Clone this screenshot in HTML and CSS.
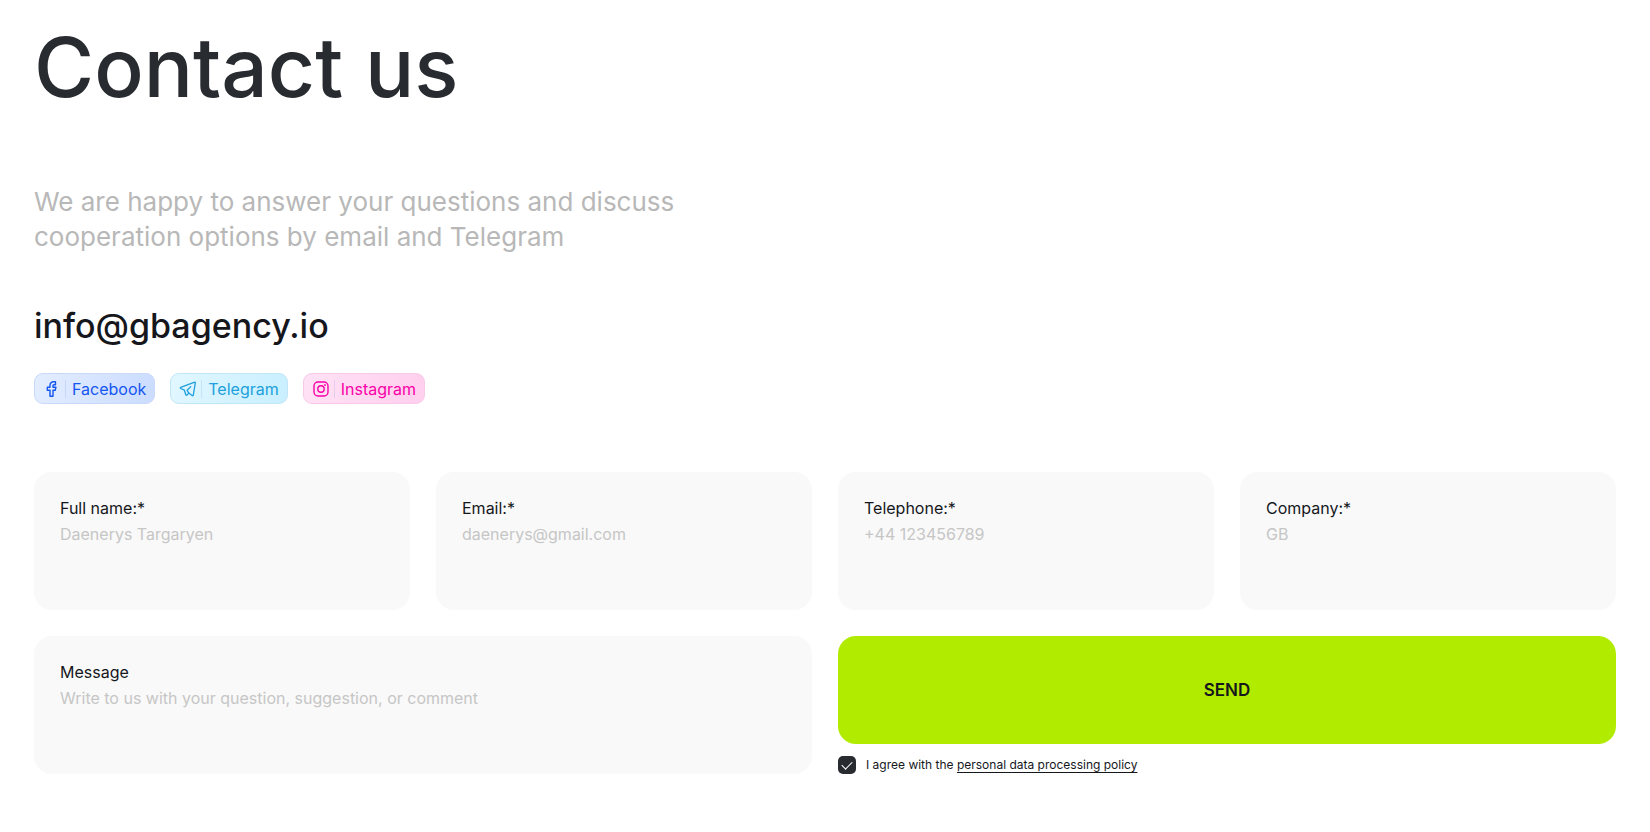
FILE: index.html
```html
<!DOCTYPE html>
<html lang="en">
<head>
  <meta charset="UTF-8">
  <meta name="viewport" content="width=device-width, initial-scale=1.0">
  <title>Contact us</title>
  <link rel="stylesheet" href="styles.css">
</head>
<body>
  <main class="contact">
    <h1 class="title">Contact us</h1>
    <p class="intro">We are happy to answer your questions and discuss cooperation options by email and Telegram</p>
    <a class="email" href="mailto:info@gbagency.io">info@gbagency.io</a>

    <nav class="socials">
      <a class="social facebook" href="#">
        <svg class="icon" viewBox="0 0 18 18" fill="none" stroke="currentColor" stroke-width="1.4" stroke-linejoin="round">
          <path d="M12 1.700h-1.500a3.500 3.500 0 0 0-3.500 3.500v2.100H4.300v3H7v6h3v-6h2.200l.7-3H10V5.600c0-.6.300-.9.900-.9H12.500v-3z"/>
        </svg>
        <span class="social-name">Facebook</span>
      </a>
      <a class="social telegram" href="#">
        <svg class="icon" viewBox="0 0 18 18" fill="none" stroke="currentColor" stroke-width="1.300" stroke-linejoin="round" stroke-linecap="round">
          <path d="M15.700 2.200 1.700 7.300c-.6.200-.6.900 0 1.200l3.700 1.700 1.400 4.500c.2.600.8.700 1.200.3l1.800-1.900 3.300 2.500c.5.400 1.100.1 1.200-.5L16.300 2.800c.1-.5-.2-.8-.6-.6z"/>
          <path d="M11.800 6.600 8.100 10.300l1.700 2.800"/>
        </svg>
        <span class="social-name">Telegram</span>
      </a>
      <a class="social instagram" href="#">
        <svg class="icon" viewBox="0 0 18 18" fill="none" stroke="currentColor" stroke-width="1.400">
          <rect x="2" y="2" width="14" height="14" rx="4"/>
          <circle cx="9" cy="9" r="3.200"/>
          <circle cx="13" cy="5" r=".9" fill="currentColor" stroke="none"/>
        </svg>
        <span class="social-name">Instagram</span>
      </a>
    </nav>

    <form class="form">
      <div class="field">
        <label for="name">Full name:*</label>
        <input type="text" id="name" placeholder="Daenerys Targaryen">
      </div>
      <div class="field">
        <label for="email">Email:*</label>
        <input type="email" id="email" placeholder="daenerys@gmail.com">
      </div>
      <div class="field">
        <label for="phone">Telephone:*</label>
        <input type="tel" id="phone" placeholder="+44 123456789">
      </div>
      <div class="field">
        <label for="company">Company:*</label>
        <input type="text" id="company" placeholder="GB">
      </div>
      <div class="field wide">
        <label for="message">Message</label>
        <textarea id="message" rows="2" placeholder="Write to us with your question, suggestion, or comment"></textarea>
      </div>
      <div class="submit wide">
        <button type="submit" class="send">SEND</button>
        <div class="agree">
          <input type="checkbox" id="agree" checked>
          <label for="agree">I agree with the <a href="#">personal data processing policy</a></label>
        </div>
      </div>
    </form>
  </main>
</body>
</html>
```
FILE: styles.css
```css
:root {
  --dark: #282b30;
  --text: #15171c;
  --field: #f9f9f9;
  --placeholder: #c6c6c6;
  --accent: #b1eb00;
}

* {
  box-sizing: border-box;
}

body {
  margin: 0;
  font-family: Inter, "Liberation Sans", sans-serif;
  font-size: 16px;
  background: #ffffff;
  color: var(--text);
}

.contact {
  padding: 16px 34px 58px;
}

.title {
  margin: 0;
  font-size: 82px;
  font-weight: 500;
  line-height: 104px;
  color: var(--dark);
}

.intro {
  max-width: 680px;
  margin: 64px 0 50px;
  font-size: 26px;
  line-height: 35px;
  color: #b8b8b8;
}

.email {
  display: block;
  width: fit-content;
  font-size: 34px;
  font-weight: 500;
  line-height: 44px;
  color: var(--text);
  text-decoration: none;
}

/* social links */
.socials {
  display: flex;
  gap: 15px;
  margin-top: 25px;
}

.social {
  display: flex;
  align-items: center;
  height: 31px;
  padding: 0 8px;
  border: 1px solid;
  border-radius: 9px;
  font-size: 16px;
  text-decoration: none;
}

.icon {
  width: 18px;
  height: 18px;
}

.social-name {
  margin-left: 4px;
  padding-left: 6px;
  border-left: 1px solid;
  border-image: linear-gradient(transparent 10%, rgba(0, 60, 200, 0.1) 10%, rgba(0, 60, 200, 0.1) 90%, transparent 90%) 1;
}

.facebook {
  color: #1556f0;
  background: linear-gradient(100deg, #e3edff, #cbdcff);
  border-color: #c9d9fa;
}

.telegram {
  color: #20a0dc;
  background: linear-gradient(100deg, #e1f7ff, #c9efff);
  border-color: #c0e6f8;
}

.instagram {
  color: #fa00a8;
  background: linear-gradient(100deg, #ffe2f5, #ffcfee);
  border-color: #f8cae8;
}

/* form */
.form {
  display: grid;
  grid-template-columns: repeat(4, 1fr);
  gap: 26px;
  margin-top: 68px;
}

.wide {
  grid-column: span 2;
}

.field {
  display: flex;
  flex-direction: column;
  min-height: 138px;
  padding: 23px 26px;
  border-radius: 18px;
  background: var(--field);
}

.field label {
  line-height: 26px;
}

.field input,
.field textarea {
  width: 100%;
  padding: 0;
  border: none;
  outline: none;
  resize: none;
  background: none;
  font: inherit;
  line-height: 26px;
  color: var(--text);
}

.field ::placeholder {
  color: var(--placeholder);
  opacity: 1;
}

.submit {
  display: flex;
  flex-direction: column;
  gap: 12px;
}

.send {
  flex: 1;
  border: none;
  border-radius: 18px;
  background: var(--accent);
  font: inherit;
  font-size: 17px;
  font-weight: 600;
  color: var(--text);
  cursor: pointer;
}

.agree {
  display: flex;
  align-items: center;
  gap: 10px;
  font-size: 12px;
  line-height: 18px;
}

.agree input {
  width: 18px;
  height: 18px;
  margin: 0;
  appearance: none;
  border-radius: 5px;
  background: var(--dark);
  display: grid;
  place-items: center;
}

.agree input:checked::before {
  content: "";
  width: 9px;
  height: 5px;
  margin-bottom: 3px;
  border-left: 1px solid #ffffff;
  border-bottom: 1px solid #ffffff;
  transform: rotate(-45deg);
}

.agree a {
  color: inherit;
  text-underline-offset: 3px;
  text-decoration-skip-ink: none;
}
```
